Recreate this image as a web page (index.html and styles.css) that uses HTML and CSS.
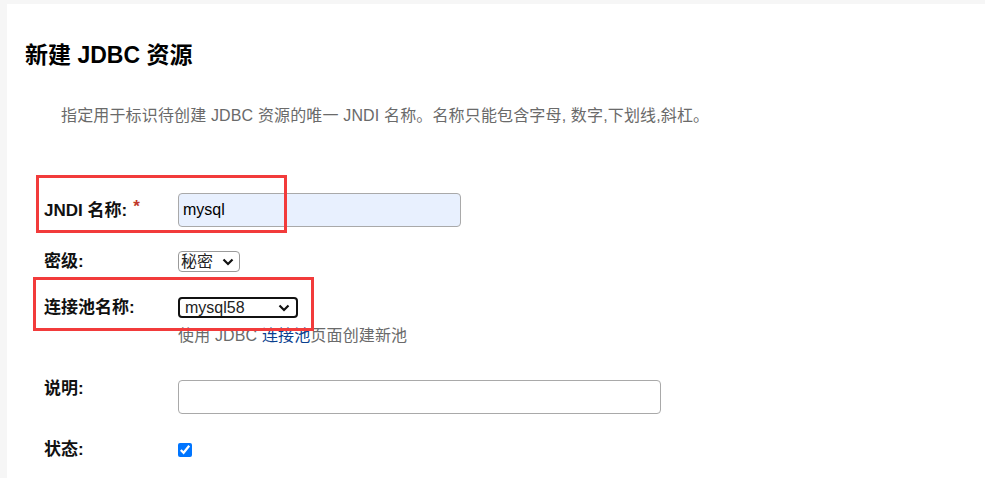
FILE: index.html
```html
<!DOCTYPE html>
<html lang="zh-CN">
<head>
<meta charset="utf-8">
<title>新建 JDBC 资源</title>
<link rel="stylesheet" href="styles.css">
</head>
<body>
<div class="panel">
  <h1 class="title">新建 JDBC 资源</h1>
  <p class="desc">指定用于标识待创建 JDBC 资源的唯一 JNDI 名称。名称只能包含字母, 数字,下划线,斜杠。</p>
  <form class="form">
    <div class="row row-name">
      <label class="label label-tall">JNDI 名称:<span class="req">*</span></label>
      <input class="text-input" type="text" value="mysql">
    </div>
    <div class="row row-level">
      <label class="label">密级:</label>
      <select class="select select-level"><option>秘密</option></select>
    </div>
    <div class="row row-pool">
      <label class="label">连接池名称:</label>
      <div class="field">
        <select class="select select-pool"><option>mysql58</option></select>
        <div class="help">使用 JDBC <a class="link" href="#">连接池</a>页面创建新池</div>
      </div>
    </div>
    <div class="row row-desc">
      <label class="label label-top">说明:</label>
      <textarea class="textarea"></textarea>
    </div>
    <div class="row row-status">
      <label class="label">状态:</label>
      <input class="check" type="checkbox" checked>
    </div>
  </form>
  <div class="mark mark-1"></div>
  <div class="mark mark-2"></div>
</div>
</body>
</html>
```
FILE: styles.css
```css
html, body {
  margin: 0;
  padding: 0;
}
body {
  background: #f6f6f6;
  font-family: "Liberation Sans", "Noto Sans CJK SC", Arial, sans-serif;
  color: #111;
  overflow: hidden;
}
.panel {
  position: relative;
  margin: 4px 0 0 7px;
  background: #fff;
  height: 474px;
  padding: 38px 0 0 18px;
  box-sizing: border-box;
}
.title {
  margin: 0;
  font-size: 23px;
  line-height: 26px;
  font-weight: bold;
  color: #000;
}
.desc {
  margin: 38px 0 0 36px;
  font-size: 16px;
  line-height: 20px;
  color: #6a6a6a;
  letter-spacing: 0.15px;
}
.form {
  margin: 67px 0 0 19px;
}
.row {
  display: grid;
  grid-template-columns: 134px auto;
  align-items: center;
  justify-content: start;
}
.row-level { margin-top: 24px; }
.row-pool { margin-top: 25px; align-items: start; }
.row-desc { margin-top: 34px; align-items: start; }
.row-status { margin-top: 25px; }
.label {
  font-size: 17px;
  font-weight: bold;
  line-height: 21px;
  color: #111;
}
.label-top {
  line-height: 17px;
}
.req {
  color: #c0392b;
  font-size: 17px;
  vertical-align: top;
  position: relative;
  top: -4px;
  margin-left: 6px;
}
.text-input {
  width: 283px;
  height: 34px;
  box-sizing: border-box;
  border: 1px solid #a9a9a9;
  border-radius: 4px;
  background: #e8f0fe;
  font-family: "Liberation Sans", "Noto Sans CJK SC", sans-serif;
  font-size: 16px;
  color: #000;
  padding: 0 4px;
  margin: 0;
}
.select {
  height: 21px;
  box-sizing: border-box;
  font-family: "Liberation Sans", "Noto Sans CJK SC", sans-serif;
  font-size: 16px;
  color: #222;
  background: #fff;
  margin: 0;
  padding: 0 2px;
  border-radius: 4px;
  appearance: none;
  background-image: url("data:image/svg+xml,%3Csvg xmlns='http://www.w3.org/2000/svg' width='12' height='8' viewBox='0 0 12 8'%3E%3Cpath d='M1.5 1.5 L6 6 L10.5 1.5' fill='none' stroke='%23111' stroke-width='2.2'/%3E%3C/svg%3E");
  background-repeat: no-repeat;
  background-position: right 5px center;
}
.select-level {
  width: 62px;
  border: 1px solid #9a9a9a;
  line-height: 19px;
}
.select-pool {
  width: 120px;
  border: 2px solid #111;
  line-height: 17px;
  padding-left: 5px;
  background-position: right 6px center;
}
.field {
  display: flex;
  flex-direction: column;
  align-items: flex-start;
}
.help {
  margin-top: 8px;
  font-size: 16px;
  line-height: 20px;
  color: #6a6a6a;
  letter-spacing: 0.15px;
}
.link {
  color: #0a3f8f;
  text-decoration: none;
}
.textarea {
  width: 483px;
  height: 34px;
  box-sizing: border-box;
  border: 1px solid #a9a9a9;
  border-radius: 4px;
  resize: none;
  margin: 0;
  display: block;
}
.check {
  width: 14px;
  height: 14px;
  margin: 0;
}
.mark {
  position: absolute;
  border: 3px solid #f23b3b;
  box-sizing: border-box;
  pointer-events: none;
}
.mark-1 {
  left: 29px;
  top: 171px;
  width: 251px;
  height: 58px;
}
.mark-2 {
  left: 26px;
  top: 273px;
  width: 281px;
  height: 54px;
}
```
